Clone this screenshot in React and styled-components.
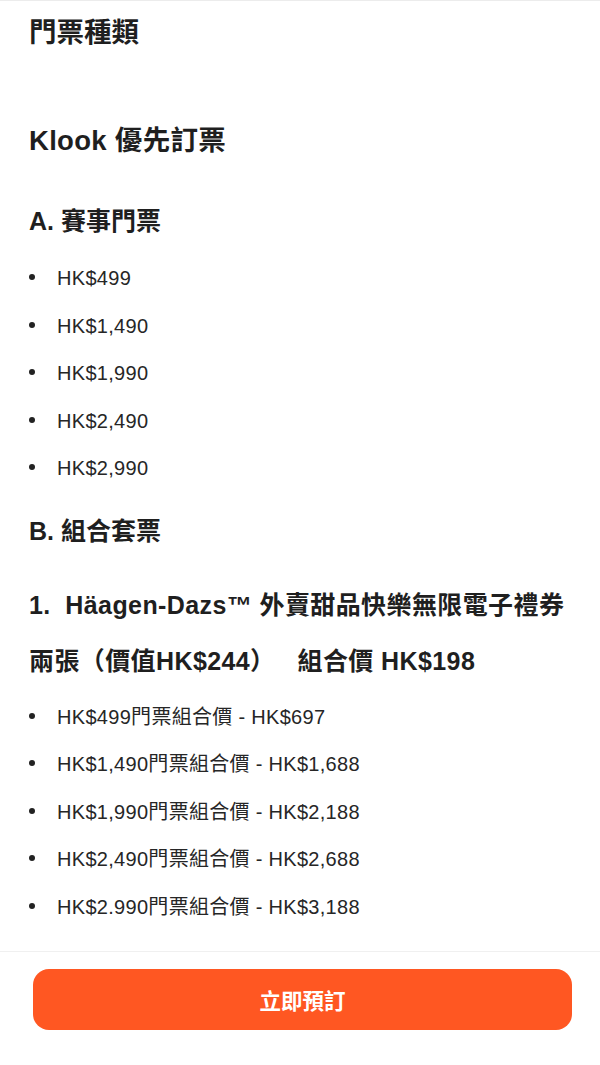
import React from "react";
import styled, { createGlobalStyle } from "styled-components";

const GlobalStyle = createGlobalStyle`
  * { box-sizing: border-box; }
  html, body { margin: 0; padding: 0; background: #fff; }
  body {
    font-family: "Liberation Sans", "Noto Sans CJK TC", sans-serif;
    color: #212121;
    -webkit-font-smoothing: antialiased;
  }
`;

const Page = styled.div`
  min-height: 100vh;
  display: flex;
  flex-direction: column;
  border-top: 1px solid #ececec;
`;

const Content = styled.div`
  padding: 0 29px;
  flex: 1;
`;

const Heading = styled.h2`
  margin: ${(p) => p.margin || "0"};
  font-size: ${(p) => p.size || "27.5px"};
  line-height: ${(p) => p.lh || "40px"};
  letter-spacing: ${(p) => p.ls || "0"};
  font-weight: 700;
  color: #1f1f1f;
`;

const Price = styled.span`
  margin-left: 22px;
`;

const List = styled.ul`
  list-style: none;
  margin: ${(p) => p.margin || "0"};
  padding: 0;
`;

const Item = styled.li`
  position: relative;
  padding-left: 28px;
  font-size: 20px;
  line-height: 47.5px;
  letter-spacing: 0.3px;
  color: #262626;
  &::before {
    content: "";
    position: absolute;
    left: 0;
    top: 19px;
    width: 6px;
    height: 6px;
    border-radius: 50%;
    background: #222;
  }
`;

const Footer = styled.div`
  border-top: 1px solid #f0f0f0;
  padding: 17px 28px 35px 33px;
`;

const BookButton = styled.button`
  display: block;
  width: 100%;
  height: 61px;
  border: none;
  border-radius: 16px;
  background: #ff5722;
  color: #fff;
  font-family: "Noto Sans CJK TC", sans-serif;
  font-size: 21.5px;
  font-weight: 700;
  cursor: pointer;
`;

const tickets = ["HK$499", "HK$1,490", "HK$1,990", "HK$2,490", "HK$2,990"];

const combos = [
  "HK$499門票組合價 - HK$697",
  "HK$1,490門票組合價 - HK$1,688",
  "HK$1,990門票組合價 - HK$2,188",
  "HK$2,490門票組合價 - HK$2,688",
  "HK$2.990門票組合價 - HK$3,188",
];

export default function App() {
  return (
    <>
      <GlobalStyle />
      <Page>
        <Content>
          <Heading margin="12px 0 0">門票種類</Heading>
          <Heading margin="68px 0 0" ls="0.3px">
            Klook 優先訂票
          </Heading>
          <Heading size="25px" margin="40px 0 0">
            A. 賽事門票
          </Heading>
          <List margin="14px 0 0">
            {tickets.map((t) => (
              <Item key={t}>{t}</Item>
            ))}
          </List>
          <Heading size="25px" margin="18px 0 0">
            B. 組合套票
          </Heading>
          <Heading size="25px" lh="56px" ls="0.4px" margin="26px 0 0">
            1.&nbsp; Häagen-Dazs™ 外賣甜品快樂無限電子禮券兩張（價值HK$244）
            <Price>組合價 HK$198</Price>
          </Heading>
          <List margin="5px 0 0">
            {combos.map((c) => (
              <Item key={c}>{c}</Item>
            ))}
          </List>
        </Content>
        <Footer>
          <BookButton>立即預訂</BookButton>
        </Footer>
      </Page>
    </>
  );
}
